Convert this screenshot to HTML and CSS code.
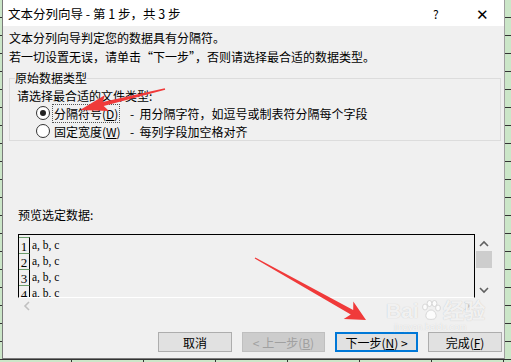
FILE: index.html
```html
<!DOCTYPE html>
<html lang="zh-CN">
<head>
  <meta charset="UTF-8" />
  <title>文本分列向导 - 第 1 步，共 3 步</title>
  <link rel="stylesheet" href="styles.css">
</head>
<body>
  <div class="dialog">
    <div class="titlebar">
      <span class="title">文本分列向导 - 第 1 步，共 3 步</span>
      <span class="help">?</span>
      <span class="close">✕</span>
    </div>

    <div class="content">
      <p class="intro">文本分列向导判定您的数据具有分隔符。</p>
      <p class="intro">若一切设置无误，请单击“下一步”，否则请选择最合适的数据类型。</p>

      <fieldset class="group">
        <legend>原始数据类型</legend>
        <div class="hint">请选择最合适的文件类型:</div>
        <div class="radio-row">
          <span class="radio checked"></span>
          <span class="radio-label"><span class="focus">分隔符号(<u>D</u>)</span></span>
          <span class="desc">-  用分隔字符，如逗号或制表符分隔每个字段</span>
        </div>
        <div class="radio-row">
          <span class="radio"></span>
          <span class="radio-label"><span class="nofocus">固定宽度(<u>W</u>)</span></span>
          <span class="desc">-  每列字段加空格对齐</span>
        </div>
      </fieldset>

      <div class="preview-label">预览选定数据:</div>

      <div class="preview">
        <div class="list">
          <div class="row"><span class="num">1</span><span class="cell">a, b, c</span></div>
          <div class="row"><span class="num">2</span><span class="cell">a, b, c</span></div>
          <div class="row"><span class="num">3</span><span class="cell">a, b, c</span></div>
          <div class="row"><span class="num">4</span><span class="cell">a, b, c</span></div>
        </div>
        <div class="vscroll">
          <svg class="chev" width="10" height="7" viewBox="0 0 10 7"><path d="M1 6 L5 2 L9 6" fill="none" stroke="#606060" stroke-width="1.6"/></svg>
          <div class="thumb"></div>
          <svg class="chev down" width="10" height="7" viewBox="0 0 10 7"><path d="M1 1 L5 5 L9 1" fill="none" stroke="#606060" stroke-width="1.6"/></svg>
        </div>
        <div class="hscroll">
          <svg width="7" height="10" viewBox="0 0 7 10"><path d="M6 1 L2 5 L6 9" fill="none" stroke="#c0c0c0" stroke-width="1.6"/></svg>
          <svg width="7" height="10" viewBox="0 0 7 10"><path d="M1 1 L5 5 L1 9" fill="none" stroke="#c0c0c0" stroke-width="1.6"/></svg>
        </div>
      </div>

      <div class="buttons">
        <button class="btn">取消</button>
        <button class="btn disabled">&lt; 上一步(<u>B</u>)</button>
        <button class="btn primary">下一步(<u>N</u>) &gt;</button>
        <button class="btn">完成(<u>F</u>)</button>
      </div>
    </div>
  </div>

  <div class="watermark">
    <div class="wm-logo">
      <span>Bai</span>
      <svg width="22" height="22" viewBox="0 0 22 22">
        <g fill="rgba(255,255,255,0.8)" stroke="#cfcfcf" stroke-width="0.8">
          <ellipse cx="5" cy="7" rx="2.4" ry="3"/>
          <ellipse cx="9.5" cy="3.5" rx="2.4" ry="3"/>
          <ellipse cx="14.5" cy="3.5" rx="2.4" ry="3"/>
          <ellipse cx="18" cy="8" rx="2.4" ry="3"/>
          <path d="M11 10 C6 10 4 18 8 19 C10 19.5 12 19.5 14 19 C18 18 16 10 11 10 Z"/>
        </g>
      </svg>
      <span>经验</span>
    </div>
    <div class="wm-url">jingyan.baidu.com</div>
  </div>

  <svg class="arrows" width="511" height="362" viewBox="0 0 511 362">
    <polygon fill="#f03a3a" points="80,110 109,111 103.7,105.9 165.2,89.7 164.8,88.3 102.7,102.1 105,95"/>
    <polygon fill="#f03a3a" points="366,320 343.7,319.1 350.8,314.5 254.7,258.6 255.3,257.4 353.2,310.1 353.3,301.5"/>
  </svg>
</body>
</html>
```

FILE: styles.css
```css
body {
  margin: 0;
  width: 511px;
  height: 362px;
  overflow: hidden;
  position: relative;
  font-family: "Noto Sans CJK SC", "Noto Sans", sans-serif;
  font-size: 12px;
  color: #000;
  background:
    repeating-linear-gradient(to bottom, transparent 0 17px, #333 17px 18px),
    repeating-linear-gradient(to right, transparent 0 71px, #333 71px 72px),
    #cbe6c8;
}

.dialog {
  margin-left: 2px;
  width: 503px;
  height: 359px;
  box-sizing: border-box;
  border-left: 1px solid #7a7a7a;
  border-right: 1px solid #a0a0a0;
  border-bottom: 1px solid #7a7a7a;
  background: #f0f0f0;
  display: flex;
  flex-direction: column;
}

.titlebar {
  height: 26px;
  background: #fff;
  display: flex;
  align-items: center;
  padding-left: 5px;
  font-size: 12.5px;
}

.title {
  flex: 1;
}

.help {
  width: 20px;
  font-size: 12px;
  margin-right: 23px;
}

.close {
  width: 28px;
  font-size: 15px;
  font-weight: 300;
}

.content {
  flex: 1;
  display: flex;
  flex-direction: column;
  padding-top: 2px;
}

.intro {
  margin: 0 0 0 6px;
  line-height: 19px;
}

.group {
  margin: 4px 3px 0 6px;
  padding: 0 5px 0 7px;
  border: 1px solid #dcdcdc;
  min-width: 0;
}

.group legend {
  padding: 0;
  margin-left: -2px;
  line-height: 16px;
}

.hint {
  line-height: 16px;
  margin-top: 2px;
}

.radio-row {
  display: flex;
  align-items: center;
  height: 18px;
}

.radio {
  width: 12px;
  height: 12px;
  border: 1px solid #333;
  border-radius: 50%;
  background: #fff;
  margin-left: 19px;
  margin-right: 2px;
  display: flex;
  align-items: center;
  justify-content: center;
}

.radio.checked::after {
  content: "";
  width: 6px;
  height: 6px;
  border-radius: 50%;
  background: #222;
}

.radio-label {
  width: 78px;
}

.focus,
.nofocus {
  padding: 0 1px;
  line-height: 14px;
  border: 1px dotted transparent;
}

.focus {
  border-color: #555;
}

.desc {
  white-space: pre;
}

.preview-label {
  margin: 66px 0 0 15px;
  line-height: 16px;
}

.preview {
  margin: 11px 0 0 15px;
  width: 475px;
  height: 80px;
  display: flex;
  flex-wrap: wrap;
}

.list {
  width: 457px;
  height: 64px;
  box-sizing: border-box;
  border: 1px solid #000;
  border-bottom: 1px solid #fff;
  padding-top: 2px;
  overflow: hidden;
}

.row {
  display: flex;
  height: 16px;
  font-family: "Liberation Serif", "DejaVu Serif", serif;
  font-size: 11.5px;
}

.num {
  width: 11px;
  box-sizing: border-box;
  border-top: 1px solid #6b9b6b;
  border-right: 1px solid #000;
  text-align: center;
  line-height: 17px;
  font-size: 13px;
}

.cell {
  padding-left: 2px;
  line-height: 17px;
}

.vscroll {
  width: 18px;
  height: 64px;
  display: flex;
  flex-direction: column;
  align-items: center;
}

.chev {
  margin-top: 6px;
}

.thumb {
  width: 16px;
  height: 17px;
  background: #cdcdcd;
  margin-top: 4px;
}

.chev.down {
  margin-top: auto;
  margin-bottom: 4px;
}

.hscroll {
  width: 457px;
  height: 16px;
  display: flex;
  justify-content: space-between;
  align-items: center;
  padding: 0 4px 0 5px;
  box-sizing: border-box;
}

.buttons {
  display: flex;
  justify-content: flex-end;
  gap: 10px;
  margin-top: 18px;
  padding-right: 2px;
}

.btn {
  height: 20px;
  box-sizing: border-box;
  border: 1px solid #adadad;
  background: #e1e1e1;
  font-family: inherit;
  font-size: 12px;
  padding: 0;
  color: #000;
}

.btn:nth-child(1),
.btn:nth-child(4) {
  width: 74px;
}

.btn.disabled {
  width: 83px;
  background: #cccccc;
  border-color: #bfbfbf;
  color: #a0a0a0;
}

.btn.primary {
  width: 83px;
  border: 2px solid #0078d7;
}

.watermark {
  position: absolute;
  left: 386px;
  top: 300px;
  pointer-events: none;
}

.wm-logo {
  display: flex;
  align-items: center;
  gap: 1px;
  font-family: "Liberation Sans", sans-serif;
  font-weight: bold;
  font-size: 21px;
  line-height: 22px;
  color: rgba(255, 255, 255, 0.8);
  text-shadow: 0 0 1px #bdbdbd;
}

.wm-url {
  font-family: "Liberation Sans", sans-serif;
  font-size: 9px;
  line-height: 10px;
  margin-left: 8px;
  color: rgba(255, 255, 255, 0.8);
  text-shadow: 0 0 1px #c8c8c8;
}

.arrows {
  position: absolute;
  left: 0;
  top: 0;
  pointer-events: none;
}
```
